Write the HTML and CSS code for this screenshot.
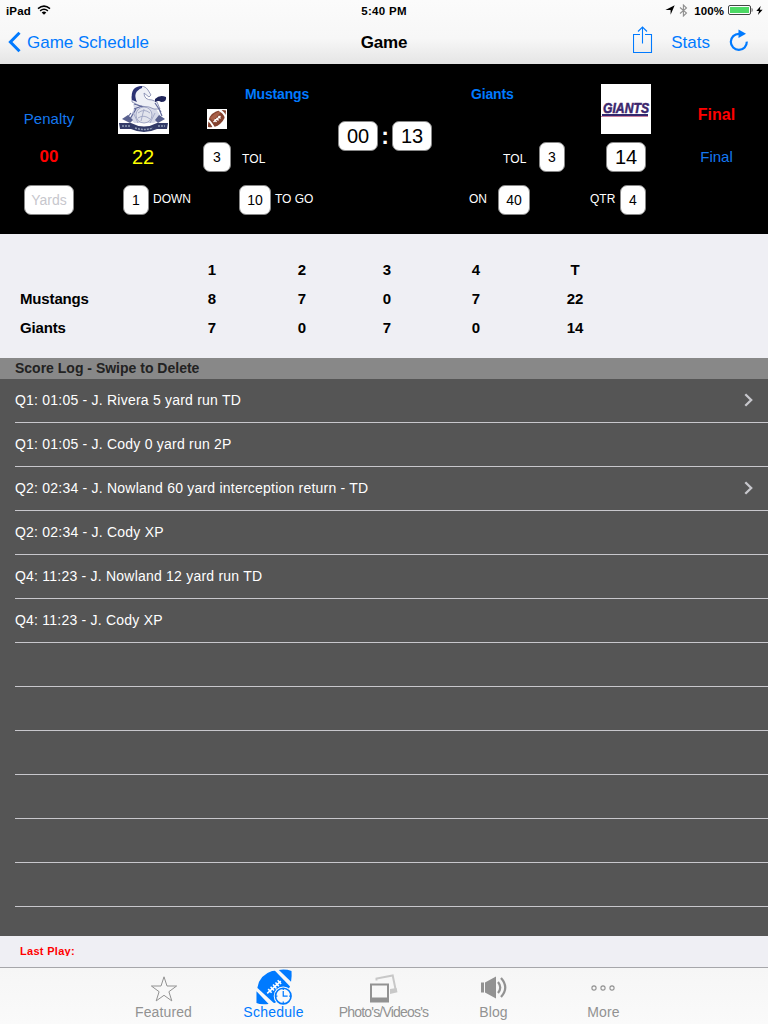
FILE: index.html
```
<!DOCTYPE html>
<html lang="en">
<head>
<meta charset="utf-8">
<title>Game</title>
<link rel="stylesheet" href="styles.css">
</head>
<body>
<header class="top">
  <div class="status">
    <div class="status-left"><span class="device">iPad</span>
      <svg class="wifi" width="14" height="10" viewBox="0 0 14 10"><path d="M1 3.6Q7-1.4 13 3.6M3.1 5.8Q7 2.8 10.9 5.8" fill="none" stroke="#000" stroke-width="1.5"/><path d="M4.7 7.4Q7 5.6 9.3 7.4L7 9.8Z"/></svg>
    </div>
    <div class="status-time">5:40 PM</div>
    <div class="status-right">
      <svg width="10" height="10" viewBox="0 0 10 10"><path d="M9.7.3 5.6 9.8V4.900H.4Z"/></svg>
      <svg class="bt" width="9" height="13" viewBox="0 0 9 13"><path d="M1 3.500 7.500 9 4.400 12V1L7.500 4 1 9.500" fill="none" stroke="#909090" stroke-width="1.100"/></svg>
      <span class="pct">100%</span>
      <svg class="batt" width="25" height="10" viewBox="0 0 25 10"><rect x=".5" y=".5" width="22" height="9" rx="1.5" fill="#fff" stroke="#444"/><rect x="2" y="2" width="19" height="6" fill="#4cd964"/><path d="M23.6 3v4q1 0 1-2t-1-2" fill="#444"/></svg>
      <svg class="bolt" width="7" height="9" viewBox="0 0 7 9"><path d="M4.7 0 .3 5H3L1.9 9 6.6 3.8H3.8Z"/></svg>
    </div>
  </div>
  <nav class="nav">
    <a class="back"><svg width="13" height="22" viewBox="0 0 13 22"><path d="M11.500 1.800 2.400 11l9.100 9.200" fill="none" stroke="#007aff" stroke-width="3"/></svg><span>Game Schedule</span></a>
    <h1 class="title">Game</h1>
    <div class="actions">
      <svg class="share" width="20" height="28" viewBox="0 0 20 28"><path d="M7 8.500H.5v18h18v-18H12M9.500 17.500V1M5 5.500 9.500 1 14 5.500" fill="none" stroke="#007aff" stroke-width="1.100"/></svg>
      <a class="stats">Stats</a>
      <svg class="reload" width="20" height="24" viewBox="0 0 20 24"><path d="M10 4.900A8 8 0 1 0 17.800 12.600" fill="none" stroke="#007aff" stroke-width="2.200"/><path d="M9.500.5 17 4.700 9.500 9Z" fill="#007aff"/></svg>
    </div>
  </nav>
</header>

<section class="board">
  <div class="penalty">
    <span class="penalty-label">Penalty</span>
    <span class="penalty-time">00</span>
    <span class="box yards">Yards</span>
  </div>
  <div class="team home">
    <div class="line ident">
      <svg class="crest" width="51" height="50" viewBox="0 0 51 50">
        <rect width="51" height="50" fill="#fff"/>
        <path d="M12 34 16 24 15 20Q21 24 29 23L38 25 44 34 36 39 16 39Z" fill="#d6d9e8"/>
        <path d="M20 4Q26 0 30 6L33 11 31 13 26 9Q26 16 34 16L39 18 42 25 36 25 31 23 22 22 14 18Q13 8 20 4Z" fill="#eef0f6" stroke="#7b83ab" stroke-width=".8"/>
        <path d="M24 2Q12 2 14 16L19 18Q14 8 24 4Z" fill="#2b3274"/>
        <path d="M37 15Q42 10 48 13 49 18 43 18 41 16 37 18Z" fill="#20255a"/>
        <path d="M16 20 29 24M16 25l8-3M37 19l6 9M41 25l3 7M13 29 9 34M18 25l-6 10" fill="none" stroke="#5f6799" stroke-width="1.200"/>
        <circle cx="26" cy="31" r="8" fill="#e2e4ed" stroke="#a5abc8"/>
        <path d="M20 29q6-5 12 0M20 34q6-4 12 1M26 25l-3 12M15 28l5 11M37 29l-5 10" fill="none" stroke="#a5abc8"/>
        <path d="M4 35 10 31 15 36 12 39ZM47 35l-6-4-4 5 3 3Z" fill="#59618f"/>
        <path d="M1 39 13 39Q26 46 39 39L50 39 49 45 39 45Q26 51 13 45L2 45Z" fill="#333b68"/>
        <path d="M4 42h8M17 44q9 3 18 0M40 42h7" fill="none" stroke="#8f9cb5" stroke-width="1.500" stroke-dasharray="2 1"/>
      </svg>
      <svg class="ball" width="20" height="20" viewBox="0 0 20 20">
        <rect width="20" height="20" fill="#fff"/>
        <path d="M1 16Q1 6 9 2.500 15 0 19 1.500 19 10 13 15 8 19 1 18Z" fill="#84422f"/>
        <path d="M3 9Q8 3 15 2L6 12Z" fill="#a85f48"/>
        <path d="M12 1Q17 3 19 9M1 11Q4 13 7 19" fill="none" stroke="#fff" stroke-width="2"/>
        <path d="M6.500 13 13.500 7M7.500 10.500l2 2.500M9.500 9l2 2.500M11.500 7l2 2.500" stroke="#fff" stroke-width="1.300"/>
      </svg>
      <b class="name">Mustangs</b>
    </div>
    <div class="line mid"><span class="score">22</span><span class="box tol-box">3</span><span class="cap tol">TOL</span></div>
    <div class="line low"><span class="box b25">1</span><span class="cap down">DOWN</span><span class="box b31">10</span><span class="cap togo">TO GO</span></div>
  </div>
  <div class="clock"><span class="box big">00</span><span class="colon">:</span><span class="box big">13</span></div>
  <div class="team away">
    <div class="line ident">
      <b class="name">Giants</b>
      <svg class="crest" width="50" height="50" viewBox="0 0 50 50">
        <rect width="50" height="50" fill="#fff"/>
        <text x="2" y="28.500" textLength="46" lengthAdjust="spacingAndGlyphs" class="wordmark">GIANTS</text>
        <path d="M1 31H47" stroke="#31276e" stroke-width="2"/><path d="M0 32.500H47" stroke="#b64b78" stroke-width=".7"/>
      </svg>
    </div>
    <div class="line mid"><span class="cap tol">TOL</span><span class="box b25">3</span><span class="box big">14</span></div>
    <div class="line low"><span class="cap on">ON</span><span class="box b31">40</span><span class="cap qtr">QTR</span><span class="box b25">4</span></div>
  </div>
  <div class="result"><b>Final</b><span>Final</span></div>
</section>

<section class="summary">
  <div class="srow"><span></span><span>1</span><span>2</span><span>3</span><span>4</span><span>T</span></div>
  <div class="srow"><span class="tn">Mustangs</span><span>8</span><span>7</span><span>0</span><span>7</span><span>22</span></div>
  <div class="srow"><span class="tn">Giants</span><span>7</span><span>0</span><span>7</span><span>0</span><span>14</span></div>
</section>

<h2 class="log-head">Score Log - Swipe to Delete</h2>
<ul class="log">
  <li>Q1: 01:05 - J. Rivera 5 yard run TD<svg class="chev" width="9" height="14" viewBox="0 0 9 14"><path d="M1.300 1.200 7.200 7 1.300 12.800" fill="none" stroke="#c7c7cc" stroke-width="2.300"/></svg></li>
  <li>Q1: 01:05 - J. Cody 0 yard run 2P</li>
  <li>Q2: 02:34 - J. Nowland 60 yard interception return - TD<svg class="chev" width="9" height="14" viewBox="0 0 9 14"><path d="M1.300 1.200 7.200 7 1.300 12.800" fill="none" stroke="#c7c7cc" stroke-width="2.300"/></svg></li>
  <li>Q2: 02:34 - J. Cody XP</li>
  <li>Q4: 11:23 - J. Nowland 12 yard run TD</li>
  <li>Q4: 11:23 - J. Cody XP</li>
  <li></li><li></li><li></li><li></li><li></li><li></li>
</ul>
<div class="last"><span>Last Play:</span></div>

<footer class="tabs">
  <a class="tab"><svg width="28" height="36" viewBox="0 0 28 36"><path d="M14 8.300 17 17.500H26.600L18.900 23.200 21.800 32.400 14 26.800 6.200 32.400 9.100 23.200 1.400 17.500H11Z" fill="none" stroke="#929292"/></svg><span>Featured</span></a>
  <a class="tab active"><svg width="38" height="38" viewBox="0 0 38 38">
    <path d="M2 20Q4 7 17 3L20 2.800 35.500 19Q34 22 32 24L20 36 18.500 35.800 2 20.500Z" fill="#007aff"/>
    <path d="M24 2Q31 1 37 3 37.500 8 36.500 14ZM1 24 13.500 37Q5 38 1 36Z" fill="#007aff"/>
    <path d="M12 26 26 13.500M13 21.500l3.500 4M15.500 19.200l3.500 4M18 17l3.500 4M20.500 14.800l3.500 4M22.800 12.500l3.500 4" stroke="#fff" stroke-width="1.600"/>
    <circle cx="28.500" cy="28.800" r="9.800" fill="#fafafa"/><circle cx="28.500" cy="28.800" r="8" fill="none" stroke="#007aff" stroke-width="1.700"/>
    <path d="M28.500 23.500v5.500h4.500M28.500 21v1.500M28.500 34.500v2M21 28.800h1.500M34.500 28.800h2" fill="none" stroke="#007aff" stroke-width="1.300"/>
  </svg><span>Schedule</span></a>
  <a class="tab photos"><svg width="30" height="36" viewBox="0 0 30 36"><path d="M7.500 12V10L23.700 7 27 23" fill="none" stroke="#c8c8c8" stroke-width="2"/><path d="M21 20.500 27.500 19.500 28.500 23.700 21 25.500Z" fill="#c8c8c8"/><path d="M1 15H20V34H1ZM3 17V29H18V17Z" fill="#929292" fill-rule="evenodd"/></svg><span>Photo's/Videos's</span></a>
  <a class="tab"><svg width="28" height="36" viewBox="0 0 28 36"><path d="M1 14H4V24H1ZM5 14 16 8V30L5 24Z" fill="#929292"/><path d="M18 13.500Q22.500 19 18 24.500M21 9.500Q29.500 19 21 28.500" fill="none" stroke="#929292" stroke-width="2.200"/></svg><span>Blog</span></a>
  <a class="tab"><svg width="28" height="36" viewBox="0 0 28 36"><g fill="none" stroke="#929292" stroke-width="1.100"><circle cx="4" cy="19.500" r="2.100"/><circle cx="13" cy="19.500" r="2.100"/><circle cx="22" cy="19.500" r="2.100"/></g></svg><span>More</span></a>
</footer>
</body>
</html>
```

FILE: styles.css
```
* { box-sizing: border-box; }
body { margin: 0; width: 768px; height: 1024px; overflow: hidden; background: #efeff4; font-family: "Liberation Sans", Arial, sans-serif; display: flex; flex-direction: column; }
svg { display: block; flex: none; }
h1, h2, ul { margin: 0; padding: 0; }

.top { height: 64px; background: linear-gradient(#fbfbfb 0, #f7f7f7 60%, #e5e5e5 100%); }
.status { height: 20px; display: grid; grid-template-columns: 1fr 100px 1fr; font-size: 11.5px; font-weight: bold; line-height: 22px; }
.status-left { display: flex; align-items: center; gap: 6px; padding-left: 6px; height: 20px; }
.device { padding-top: 2px; letter-spacing: .15px; }
.status-time { text-align: center; height: 20px; letter-spacing: .3px; }
.status-right { display: flex; align-items: center; justify-content: flex-end; height: 20px; padding-right: 5px; }
.bt { margin-left: 4px; }
.pct { margin: 2px 4px 0 6px; letter-spacing: .1px; }
.bolt { margin-left: 3px; }
.nav { height: 44px; display: grid; grid-template-columns: 1fr 100px 1fr; align-items: center; font-size: 17px; color: #007aff; }
.back { display: flex; align-items: center; gap: 6px; padding-left: 8px; }
.back span, .title, .stats { padding-top: 2px; }
.title { font-size: 17px; color: #000; text-align: center; letter-spacing: -.2px; }
.actions { display: flex; align-items: center; justify-content: flex-end; padding-right: 19px; }
.share { margin: -4px 18px 0 0; }
.reload { margin: -2px 0 0 19px; }

.board { height: 170px; background: #000; color: #fff; display: grid; grid-template-columns: 98px 240px 94px 226px 110px; }
.box { height: 30px; border-radius: 7px; border: 1px solid #888; background: #fff; color: #000; display: flex; align-items: center; justify-content: center; font-size: 14px; flex: none; }
.b25 { width: 26px; }
.b31 { width: 32px; }
.big { width: 40px; font-size: 20px; }
.penalty { display: flex; flex-direction: column; align-items: center; padding-top: 46px; }
.penalty-label { font-size: 15px; line-height: 18px; color: #1578f0; letter-spacing: .1px; }
.penalty-time { font-size: 17px; line-height: 20px; font-weight: bold; color: #f00; margin: 19px 0 18px; }
.yards { width: 50px; color: #c7c7cd; }
.line { display: flex; }
.ident { height: 77px; padding-top: 20px; }
.mid { height: 44px; align-items: flex-start; padding-top: 1px; }
.low { height: 30px; align-items: center; }
.name { font-size: 14px; line-height: 16px; color: #007aff; letter-spacing: -.15px; margin-top: 2px; }
.cap { font-size: 12px; }
.tol { letter-spacing: .2px; line-height: 14px; margin-top: 10px; }
.home .crest { margin-left: 20px; }
.home .ball { margin: 25px 18px 0 38px; }
.score { width: 50px; margin-left: 20px; text-align: center; color: #ff0; font-size: 20px; line-height: 30px; }
.tol-box { width: 28px; margin: 0 11px 0 35px; }
.home .low .b25 { margin-left: 25px; }
.home .down { margin: 0 48px 0 4px; width: 38px; }
.home .togo { margin-left: 4px; }
.home .low .cap, .away .low .cap { padding-bottom: 3px; }
.clock { display: flex; justify-content: space-between; align-items: center; height: 30px; margin-top: 57px; }
.colon { font-size: 23px; font-weight: bold; line-height: 30px; width: 14px; text-align: center; padding-bottom: 1px; }
.away .name { margin-left: 39px; width: 130px; }
.away .mid .tol { margin-left: 71px; width: 36px; }
.away .mid .big { margin-left: 41px; }
.away .on { margin-left: 37px; width: 29px; }
.away .qtr { margin-left: 60px; width: 30px; }
.wordmark { font: italic bold 15px "Liberation Sans", Arial, sans-serif; fill: #31276e; stroke: #4d2a6e; stroke-width: .6px; }
.result { display: flex; flex-direction: column; align-items: center; padding: 41px 0 0 7px; }
.result b { font-size: 16px; line-height: 20px; color: #f00; }
.result span { font-size: 15px; line-height: 18px; color: #1578f0; margin-top: 23px; }

.summary { height: 124px; padding-top: 21px; font-size: 15px; font-weight: bold; }
.srow { height: 29px; line-height: 29px; display: grid; grid-template-columns: 167px 90px 90px 80px 98px 100px; text-align: center; }
.tn { text-align: left; padding-left: 20px; letter-spacing: -.15px; }

.log-head { height: 21px; background: #888; color: #222; font-size: 14px; line-height: 21px; padding-left: 15px; }
.log { list-style: none; background: #555; height: 557px; padding-left: 15px; }
.log li { height: 44px; border-bottom: 1px solid #c8c7cc; display: flex; align-items: center; justify-content: space-between; color: #fff; font-size: 14px; letter-spacing: .22px; padding: 0 15px 2px 0; }
.last { height: 31px; padding: 8px 20px; color: #f00; font-size: 11px; font-weight: bold; letter-spacing: .3px; }
.last span { display: block; height: 12px; line-height: 14px; overflow: hidden; }

.tabs { height: 57px; border-top: 1px solid #a6a6aa; background: linear-gradient(#f6f6f6, #fafafa); display: flex; justify-content: center; padding-right: 1px; }
.tab { width: 110px; display: flex; flex-direction: column; align-items: center; color: #929292; font-size: 14px; }
.tab svg { height: 37px; overflow: visible; }
.tab span { line-height: 14px; white-space: nowrap; letter-spacing: .1px; }
.tab.active { color: #007aff; }
.tab.active span { letter-spacing: .25px; }
.tab.photos span { letter-spacing: -.8px; }
```
